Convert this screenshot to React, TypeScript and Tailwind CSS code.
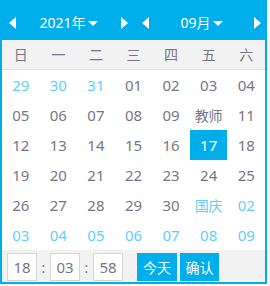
import React from "react";

const BLUE = "bg-[#00aeec]";

function ArrowLeft() {
  return (
    <svg width="7" height="12" viewBox="0 0 7 12" className="block">
      <polygon points="7,0 7,12 0,6" fill="#fff" />
    </svg>
  );
}
function ArrowRight() {
  return (
    <svg width="7" height="12" viewBox="0 0 7 12" className="block">
      <polygon points="0,0 0,12 7,6" fill="#fff" />
    </svg>
  );
}
function Caret() {
  return (
    <svg width="10" height="5" viewBox="0 0 10 5" className="block ml-[2px] mt-[1px]">
      <polygon points="0,0 10,0 5,5" fill="#fff" />
    </svg>
  );
}

type Day = { t: string; kind: "other" | "cur" | "sel" | "festOther" | "fest" };

const rows: Day[][] = [
  [
    { t: "29", kind: "other" },
    { t: "30", kind: "other" },
    { t: "31", kind: "other" },
    { t: "01", kind: "cur" },
    { t: "02", kind: "cur" },
    { t: "03", kind: "cur" },
    { t: "04", kind: "cur" },
  ],
  [
    { t: "05", kind: "cur" },
    { t: "06", kind: "cur" },
    { t: "07", kind: "cur" },
    { t: "08", kind: "cur" },
    { t: "09", kind: "cur" },
    { t: "教师", kind: "fest" },
    { t: "11", kind: "cur" },
  ],
  [
    { t: "12", kind: "cur" },
    { t: "13", kind: "cur" },
    { t: "14", kind: "cur" },
    { t: "15", kind: "cur" },
    { t: "16", kind: "cur" },
    { t: "17", kind: "sel" },
    { t: "18", kind: "cur" },
  ],
  [
    { t: "19", kind: "cur" },
    { t: "20", kind: "cur" },
    { t: "21", kind: "cur" },
    { t: "22", kind: "cur" },
    { t: "23", kind: "cur" },
    { t: "24", kind: "cur" },
    { t: "25", kind: "cur" },
  ],
  [
    { t: "26", kind: "cur" },
    { t: "27", kind: "cur" },
    { t: "28", kind: "cur" },
    { t: "29", kind: "cur" },
    { t: "30", kind: "cur" },
    { t: "国庆", kind: "festOther" },
    { t: "02", kind: "other" },
  ],
  [
    { t: "03", kind: "other" },
    { t: "04", kind: "other" },
    { t: "05", kind: "other" },
    { t: "06", kind: "other" },
    { t: "07", kind: "other" },
    { t: "08", kind: "other" },
    { t: "09", kind: "other" },
  ],
];

const weekdays = ["日", "一", "二", "三", "四", "五", "六"];

function cellClass(k: Day["kind"]) {
  if (k === "sel") return "bg-[#00aeec] text-white";
  if (k === "other" || k === "festOther") return "text-[#62d0fa]";
  return "text-[#777784]";
}

export default function App() {
  return (
    <div
      className="w-[267px] border-2 border-[#00aeec] bg-white text-[14px]"
      style={{ fontFamily: '"Noto Sans", "Noto Sans CJK SC", sans-serif' }}
    >
      <div className={`${BLUE} h-[38px] flex text-white`}>
        <div className="w-[131px] flex items-center pl-[7px] pr-[5px] pt-[3px]">
          <ArrowLeft />
          <div className="flex-1 flex items-center justify-center">
            <span className="leading-none">2021年</span>
            <Caret />
          </div>
          <ArrowRight />
        </div>
        <div className="flex-1 flex items-center pl-[9px] pr-[4px] pt-[3px]">
          <ArrowLeft />
          <div className="flex-1 flex items-center justify-center">
            <span className="leading-none">09月</span>
            <Caret />
          </div>
          <ArrowRight />
        </div>
      </div>
      <div className="grid grid-cols-7 h-[30px] bg-[#f2f2f2] border-b border-[#e2e2e2]">
        {weekdays.map((w) => (
          <div key={w} className="flex items-center justify-center text-[#777784] text-[14px]">
            {w}
          </div>
        ))}
      </div>
      <div className="grid grid-cols-7">
        {rows.flat().map((d, i) => (
          <div
            key={i}
            className={`h-[30px] flex items-center justify-center text-[15px] ${cellClass(d.kind)}`}
          >
            <span className={d.kind === "fest" || d.kind === "festOther" ? "text-[14px]" : ""}>{d.t}</span>
          </div>
        ))}
      </div>
      <div className="h-[32px] bg-[#f2f2f2] flex items-start pt-[3px] pl-[5px]">
        <div className="w-[30px] h-[28px] bg-white border border-[#d6d6d6] flex items-center justify-center text-[#777784] text-[15px]">
          18
        </div>
        <div className="w-[13px] h-[28px] flex items-center justify-center text-[#777784]">:</div>
        <div className="w-[30px] h-[28px] bg-white border border-[#d6d6d6] flex items-center justify-center text-[#777784] text-[15px]">
          03
        </div>
        <div className="w-[13px] h-[28px] flex items-center justify-center text-[#777784]">:</div>
        <div className="w-[30px] h-[28px] bg-white border border-[#d6d6d6] flex items-center justify-center text-[#777784] text-[15px]">
          58
        </div>
        <div className="ml-[14px] w-[40px] h-[28px] bg-[#00aeec] text-white flex items-center justify-center text-[14px]">
          今天
        </div>
        <div className="ml-[3px] w-[39px] h-[28px] bg-[#00aeec] text-white flex items-center justify-center text-[14px]">
          确认
        </div>
      </div>
    </div>
  );
}
